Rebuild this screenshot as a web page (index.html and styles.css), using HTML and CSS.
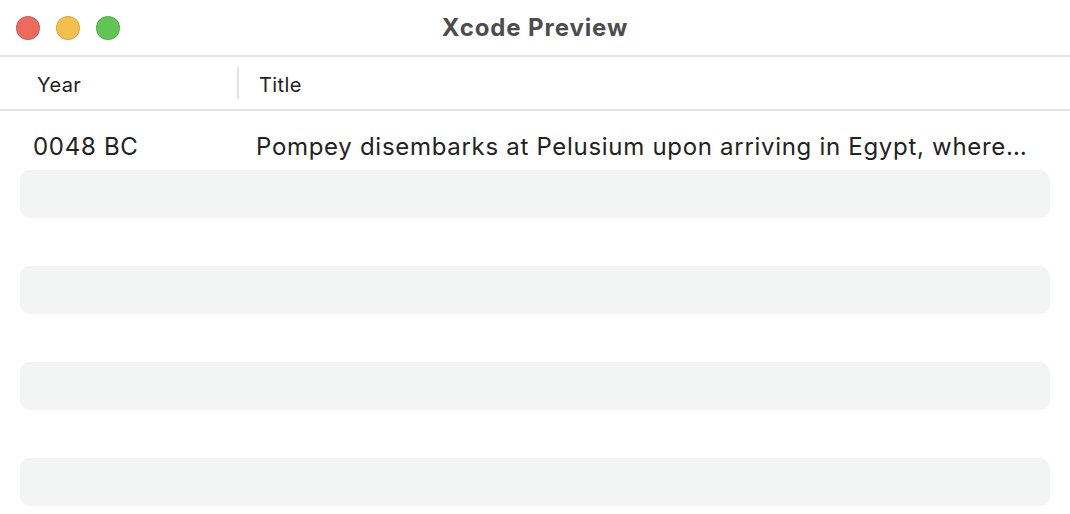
FILE: index.html
```html
<!DOCTYPE html>
<html>
<head>
<meta charset="utf-8">
<link rel="stylesheet" href="styles.css">
</head>
<body>
<div class="window">
  <div class="titlebar">
    <div class="lights">
      <span class="light red"></span>
      <span class="light yellow"></span>
      <span class="light green"></span>
    </div>
    <div class="title">Xcode Preview</div>
  </div>
  <div class="header">
    <div class="hcol year-h">Year</div>
    <div class="hdiv"></div>
    <div class="hcol title-h">Title</div>
  </div>
  <div class="rows">
    <div class="row">
      <div class="cell year">0048 BC</div>
      <div class="cell ttl">Pompey disembarks at Pelusium upon arriving in Egypt, where…</div>
    </div>
    <div class="row alt"></div>
    <div class="row"></div>
    <div class="row alt"></div>
    <div class="row"></div>
    <div class="row alt"></div>
    <div class="row"></div>
    <div class="row alt"></div>
  </div>
</div>
</body>
</html>
```
FILE: styles.css
```css
html, body {
  margin: 0;
  padding: 0;
  background: #ffffff;
}
body {
  width: 1070px;
  height: 514px;
  overflow: hidden;
  font-family: Inter, "Noto Sans", sans-serif;
  color: #222222;
}
.window {
  display: flex;
  flex-direction: column;
}
.titlebar {
  position: relative;
  height: 55px;
  border-bottom: 2px solid #e3e3e3;
  display: flex;
  align-items: center;
  justify-content: center;
}
.lights {
  position: absolute;
  left: 16px;
  top: 16px;
  display: flex;
  gap: 16px;
}
.light {
  width: 22px;
  height: 22px;
  border-radius: 50%;
  display: block;
  border: 1px solid rgba(0,0,0,0.12);
}
.red { background: #ec6a5e; }
.yellow { background: #f4bf4f; }
.green { background: #61c554; }
.title {
  font-size: 24px;
  font-weight: 700;
  color: #4d4d4d;
  margin-top: -1px;
  letter-spacing: 0.9px;
}
.header {
  height: 52px;
  border-bottom: 2px solid #e3e3e3;
  display: flex;
  align-items: center;
}
.hcol {
  font-size: 20px;
  color: #222;
  letter-spacing: 0.4px;
  margin-top: 3px;
}
.year-h {
  padding-left: 37px;
  width: 200px;
}
.hdiv {
  width: 2px;
  height: 32px;
  background: #e3e3e3;
}
.title-h {
  padding-left: 20px;
}
.rows {
  padding: 11px 20px 0;
  display: flex;
  flex-direction: column;
}
.row {
  height: 48px;
  display: flex;
  align-items: center;
  border-radius: 10px;
  flex-shrink: 0;
}
.row.alt {
  background: #f3f4f4;
}
.cell {
  font-size: 24px;
  color: #222;
  white-space: nowrap;
  letter-spacing: 0.7px;
  margin-top: 1px;
}
.cell.year {
  width: 223px;
  padding-left: 13px;
}
.cell.ttl {
  padding-left: 0;
}
```
